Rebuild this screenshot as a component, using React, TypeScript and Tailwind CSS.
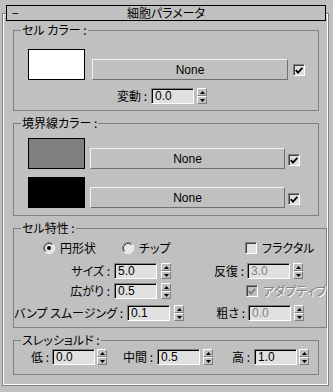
import React from "react";

const jp = "font-['Noto_Sans_CJK_JP',sans-serif] [font-feature-settings:'palt']";

function Field({ value, disabled }: { value: string; disabled?: boolean }) {
  return (
    <div
      className={`w-[43px] h-[16px] shrink-0 bg-[#e0e0e0] border border-t-[#808080] border-l-[#808080] border-r-white border-b-white shadow-[inset_1px_1px_0_#000] pl-[3px] flex items-center text-[12px] leading-none font-['Liberation_Sans',sans-serif] ${
        disabled ? "text-[#808080]" : "text-black"
      }`}
    >
      {value}
    </div>
  );
}

function Spinner({ cls = "ml-[3px]" }: { cls?: string }) {
  const half =
    "flex-1 bg-[#c0c0c0] border border-t-white border-l-white border-r-[#808080] border-b-[#808080] flex items-center justify-center";
  return (
    <div className={`w-[10px] h-[16px] shrink-0 flex flex-col ${cls}`}>
      <div className={half}>
        <svg width="5" height="3" viewBox="0 0 5 3">
          <path d="M2.5 0 L5 3 L0 3 Z" fill="#000" />
        </svg>
      </div>
      <div className={half}>
        <svg width="5" height="3" viewBox="0 0 5 3">
          <path d="M0 0 L5 0 L2.5 3 Z" fill="#000" />
        </svg>
      </div>
    </div>
  );
}

function Check({ checked, disabled, cls = "" }: { checked?: boolean; disabled?: boolean; cls?: string }) {
  return (
    <div
      className={`w-[12px] h-[12px] shrink-0 border border-t-[#808080] border-l-[#808080] border-b-white border-r-white shadow-[inset_1px_1px_0_#404040] flex items-center justify-center ${
        disabled ? "bg-[#c0c0c0]" : "bg-[#e0e0e0]"
      } ${cls}`}
    >
      {checked && (
        <svg width="8" height="7" viewBox="0 0 8 7">
          <path
            d="M0.8 3.2 L3 5.6 L7.4 0.8"
            fill="none"
            stroke={disabled ? "#808080" : "#000"}
            strokeWidth="1.9"
          />
        </svg>
      )}
    </div>
  );
}

function Radio({ on }: { on?: boolean }) {
  return (
    <svg width="12" height="12" viewBox="0 0 12 12" className="shrink-0">
      <circle cx="6" cy="6" r="5" fill="#e8e8e8" />
      <path d="M2.11 9.89 A5.5 5.5 0 0 1 9.89 2.11" fill="none" stroke="#808080" strokeWidth="1" />
      <path d="M9.89 2.11 A5.5 5.5 0 0 1 2.11 9.89" fill="none" stroke="#ffffff" strokeWidth="1" />
      <path d="M2.82 9.18 A4.5 4.5 0 0 1 9.18 2.82" fill="none" stroke="#404040" strokeWidth="1" />
      <path d="M9.18 2.82 A4.5 4.5 0 0 1 2.82 9.18" fill="none" stroke="#dfdfdf" strokeWidth="1" />
      {on && <circle cx="6" cy="6" r="2" fill="#000" />}
    </svg>
  );
}

function Btn({ cls }: { cls: string }) {
  return (
    <div
      className={`h-[21px] shrink-0 bg-[#c0c0c0] border border-t-[#f0f0f0] border-l-[#f0f0f0] border-r-[#707070] border-b-[#707070] flex items-center justify-center text-[12px] leading-none text-black font-['Liberation_Sans',sans-serif] ${cls}`}
    >
      None
    </div>
  );
}

function Group({ title, pb, children }: { title: string; pb: string; children: React.ReactNode }) {
  return (
    <fieldset className={`w-[306px] m-0 p-0 border border-[#808080] ${pb}`}>
      <legend className="ml-[7px] px-[1px] leading-[12px] text-[12px]">{title}</legend>
      {children}
    </fieldset>
  );
}

export default function App() {
  return (
    <div className={`w-[333px] h-[392px] bg-[#c0c0c0] pt-[5px] text-black text-[12px] leading-[12px] whitespace-nowrap ${jp}`}>
      <div className="relative z-10 ml-[6px] w-[320px] h-[16px] border border-black bg-[#c0c0c0] grid grid-cols-[1fr_auto_1fr] items-center">
        <span className="pl-[5px]">−</span>
        <span>細胞パラメータ</span>
        <span />
      </div>
      <div className="ml-[2px] -mt-[8px] w-[327px] h-[373px] border border-[#808080] shadow-[inset_1px_1px_0_#fff,inset_-1px_-1px_0_#fff] pt-[10px] pl-[10px] flex flex-col gap-[6px]">
        <Group title="セル カラー :" pb="pb-[6px]">
          <div className="flex items-end pl-[14px] mt-[13px]">
            <div className="w-[57px] h-[31px] border border-black bg-white" />
            <Btn cls="ml-[7px] w-[196px]" />
            <Check checked cls="ml-[5px] mb-[4px]" />
          </div>
          <div className="flex items-center mt-[8px] h-[16px]">
            <span className="w-[137px] text-right pr-[4px]">変動 :</span>
            <Field value="0.0" />
            <Spinner />
          </div>
        </Group>

        <Group title="境界線カラー :" pb="pb-[7px]">
          <div className="flex items-end pl-[14px] mt-[9px]">
            <div className="w-[57px] h-[31px] border border-black bg-[#808080]" />
            <Btn cls="ml-[5px] w-[195px]" />
            <Check checked cls="ml-[3px] mb-[3px]" />
          </div>
          <div className="flex items-end pl-[14px] mt-[8px]">
            <div className="w-[57px] h-[31px] border border-black bg-black" />
            <Btn cls="ml-[5px] w-[195px]" />
            <Check checked cls="ml-[3px] mb-[3px]" />
          </div>
        </Group>

        <Group title="セル特性 :" pb="pb-[6px]">
          <div className="flex items-center mt-[6px] h-[16px] pl-[29px]">
            <div className="w-[79px] flex items-center">
              <Radio on />
              <span className="ml-[5px]">円形状</span>
            </div>
            <div className="w-[123px] flex items-center">
              <Radio />
              <span className="ml-[5px]">チップ</span>
            </div>
            <Check />
            <span className="ml-[5px]">フラクタル</span>
          </div>
          <div className="flex items-center mt-[7px] h-[16px]">
            <div className="w-[191px] flex items-center">
              <span className="w-[100px] text-right pr-[4px]">サイズ :</span>
              <Field value="5.0" />
              <Spinner cls="ml-[4px]" />
            </div>
            <span className="w-[42px] text-right pr-[3px]">反復 :</span>
            <Field value="3.0" disabled />
            <Spinner />
          </div>
          <div className="flex items-center mt-[4px] h-[16px]">
            <div className="w-[191px] flex items-center">
              <span className="w-[100px] text-right pr-[4px]">広がり :</span>
              <Field value="0.5" />
              <Spinner cls="ml-[4px]" />
            </div>
            <div className="pl-[41px] flex items-center">
              <Check checked disabled />
              <span className="ml-[5px] text-[#808080] [text-shadow:1px_1px_0_#fff]">アダプティブ</span>
            </div>
          </div>
          <div className="flex items-center mt-[6px] h-[16px]">
            <div className="w-[191px] flex items-center">
              <span className="w-[113px] text-right pr-[4px]">バンプ スムージング :</span>
              <Field value="0.1" />
              <Spinner cls="ml-[4px]" />
            </div>
            <span className="w-[43px] text-right pr-[3px]">粗さ :</span>
            <Field value="0.0" disabled />
            <Spinner />
          </div>
        </Group>

        <Group title="スレッショルド :" pb="pb-[9px]">
          <div className="flex items-center mt-[3px] h-[16px]">
            <span className="w-[38px] text-right pr-[3px]">低 :</span>
            <Field value="0.0" />
            <Spinner cls="ml-[2px]" />
            <span className="w-[50px] text-right pr-[4px]">中間 :</span>
            <Field value="0.5" />
            <Spinner />
            <span className="w-[41px] text-right pr-[4px]">高 :</span>
            <Field value="1.0" />
            <Spinner cls="ml-[2px]" />
          </div>
        </Group>
      </div>
    </div>
  );
}
